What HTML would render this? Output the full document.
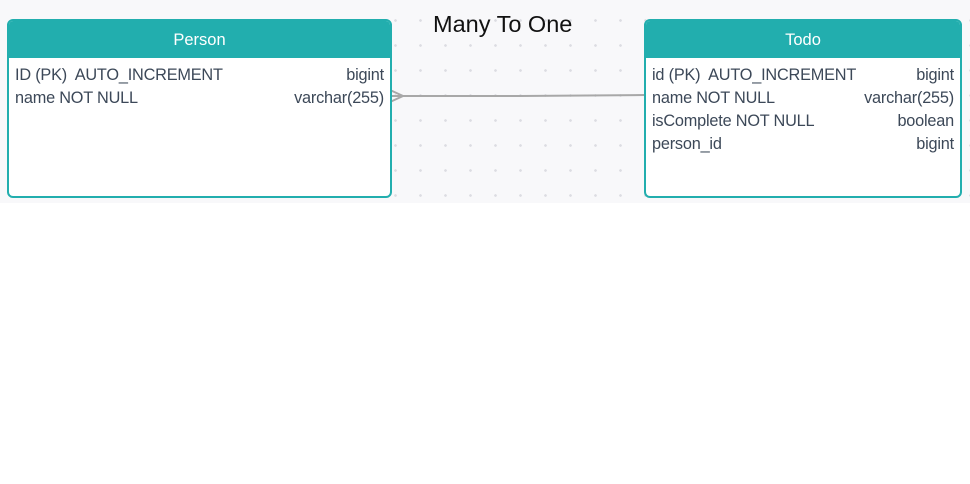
<!DOCTYPE html>
<html><head><style>
body{margin:0;width:970px;height:484px;background:#fff;font-family:"Liberation Sans",sans-serif;position:relative;overflow:hidden}
.canvas{position:absolute;left:0;top:0;width:970px;height:203px;background-color:#f8f8fa;background-image:radial-gradient(circle,#dcdde2 1.2px,transparent 1.5px);background-size:25px 25px;background-position:383px 8px}
.box{position:absolute;background:#fff;border:2px solid #22aeae;border-radius:6px;overflow:hidden;box-sizing:border-box}
.hd{background:#22aeae;color:#fff;text-align:center;height:37px;line-height:39px;font-size:16.5px}
.row{display:flex;justify-content:space-between;padding:0 6px 0 6px;font-size:16.3px;color:#3c4858;height:23px;line-height:24px;letter-spacing:-0.2px}
.rows{padding-top:5px}
.title{position:absolute;left:433px;top:11px;font-size:23.5px;color:#111}
</style></head><body>
<div class="canvas"></div>
<svg style="position:absolute;left:0;top:0" width="970" height="203">
<path d="M391 96 L520 96 L645 95" stroke="#a8a8a8" stroke-width="2" fill="none"/>
<path d="M390 90 L403 96 L390 102" stroke="#a8a8a8" stroke-width="2" fill="none"/>
</svg>
<div class="title">Many To One</div>
<div class="box" style="left:7px;top:19px;width:385px;height:179px">
<div class="hd">Person</div>
<div class="rows">
<div class="row"><span>ID (PK)&nbsp; AUTO_INCREMENT</span><span>bigint</span></div>
<div class="row"><span>name NOT NULL</span><span>varchar(255)</span></div>
</div></div>
<div class="box" style="left:644px;top:19px;width:318px;height:179px">
<div class="hd">Todo</div>
<div class="rows">
<div class="row"><span>id (PK)&nbsp; AUTO_INCREMENT</span><span>bigint</span></div>
<div class="row"><span>name NOT NULL</span><span>varchar(255)</span></div>
<div class="row"><span>isComplete NOT NULL</span><span>boolean</span></div>
<div class="row"><span>person_id</span><span>bigint</span></div>
</div></div>
</body></html>
